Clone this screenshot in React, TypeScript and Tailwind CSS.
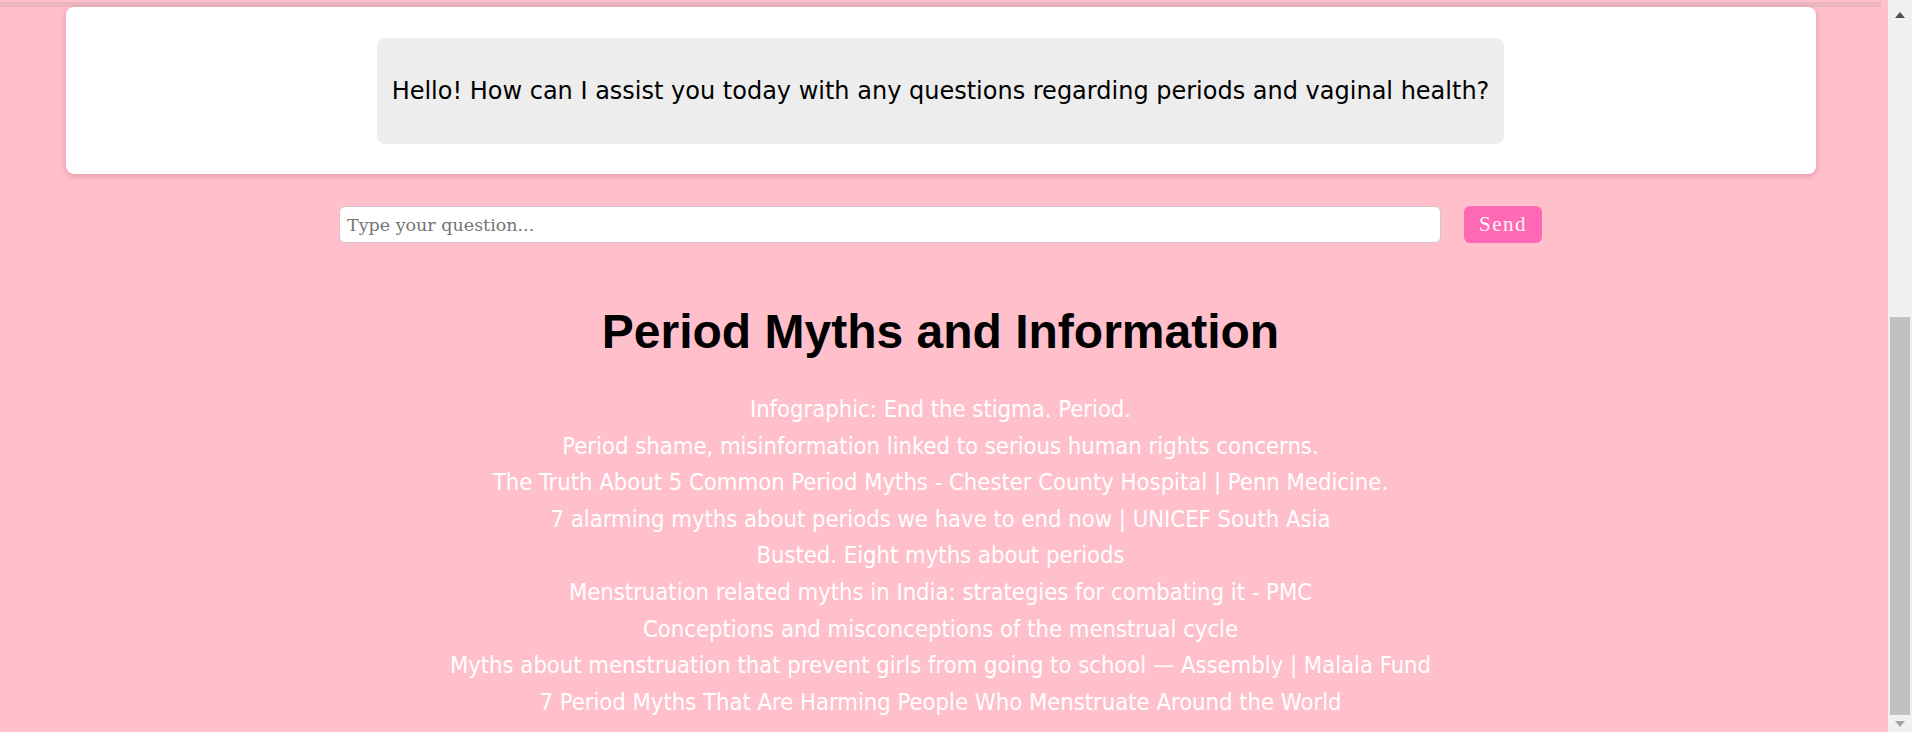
import React from 'react';

const links = [
  'Infographic: End the stigma. Period.',
  'Period shame, misinformation linked to serious human rights concerns.',
  'The Truth About 5 Common Period Myths - Chester County Hospital | Penn Medicine.',
  '7 alarming myths about periods we have to end now | UNICEF South Asia',
  'Busted. Eight myths about periods',
  'Menstruation related myths in India: strategies for combating it - PMC',
  'Conceptions and misconceptions of the menstrual cycle',
  'Myths about menstruation that prevent girls from going to school — Assembly | Malala Fund',
  '7 Period Myths That Are Harming People Who Menstruate Around the World',
];

const ScrollBar: React.FC = () => (
  <div className="w-[24px] h-[732px] bg-[#f0f0f0] flex flex-col items-center shrink-0">
    <div className="h-[26px] w-full flex items-center justify-center pt-[4px]">
      <svg width="10" height="6" viewBox="0 0 10 6">
        <path d="M0 6 L5 0 L10 6 Z" fill="#505050" />
      </svg>
    </div>
    <div className="mt-[291px] h-[398px] w-[20px] bg-[#c1c1c1]" />
    <div className="flex-1 w-full flex items-center justify-center">
      <svg width="10" height="6" viewBox="0 0 10 6">
        <path d="M0 0 L10 0 L5 6 Z" fill="#a3a3a3" />
      </svg>
    </div>
  </div>
);

const App: React.FC = () => {
  return (
    <div className="w-[1912px] h-[732px] overflow-hidden flex bg-[#ffc0cb]">
      <div className="flex-1 flex flex-col pr-[7px]">
        <div className="h-[2px]" />
        <div className="h-[5px] bg-[#ebb6c0]" />

        {/* chat window */}
        <div className="mx-auto w-[1750px] h-[167px] bg-white rounded-[8px] shadow-[0_2px_6px_rgba(160,80,100,0.35)] flex items-center justify-center">
          <div
            className="h-[106px] px-[15px] bg-[#ededed] rounded-[8px] flex items-center text-[24px] text-black"
            style={{ fontFamily: '"DejaVu Sans", Verdana, sans-serif' }}
          >
            Hello! How can I assist you today with any questions regarding periods and vaginal health?
          </div>
        </div>

        <div className="mt-[32px] flex justify-center gap-[23px]">
          <input
            type="text"
            placeholder="Type your question..."
            className="w-[1102px] h-[37px] px-[7px] bg-white border border-[#d4c4c7] rounded-[6px] text-[17.5px] text-black placeholder:text-[#757575] outline-none"
            style={{ fontFamily: '"DejaVu Serif", Georgia, serif' }}
          />
          <button
            className="w-[78px] h-[37px] bg-[#ff69b4] rounded-[6px] text-[#fff4fa] text-[21px] tracking-[1.5px]"
            style={{ fontFamily: '"Liberation Serif", "Courier New", serif' }}
          >
            Send
          </button>
        </div>

        <h2
          className="mt-[61px] text-center text-[48px] leading-[56px] font-bold text-black"
          style={{ fontFamily: '"Liberation Sans", Arial, sans-serif' }}
        >
          Period Myths and Information
        </h2>

        <ul
          className="mt-[31px] flex flex-col items-center text-white text-[23.6px] leading-[36.6px]"
          style={{ fontFamily: '"DejaVu Sans Condensed", Tahoma, sans-serif' }}
        >
          {links.map((l, i) => (
            <li key={i}>
              <a href="#">{l}</a>
            </li>
          ))}
        </ul>
      </div>
      <ScrollBar />
    </div>
  );
};

export default App;
